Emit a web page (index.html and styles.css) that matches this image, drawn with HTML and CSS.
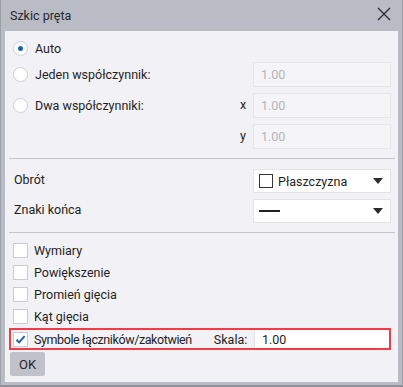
FILE: index.html
```html
<!DOCTYPE html>
<html>
<head>
<meta charset="utf-8">
<link rel="stylesheet" href="styles.css">
</head>
<body>
<div class="window">
  <div class="titlebar">
    <span class="title">Szkic pręta</span>
    <svg class="close" width="14" height="14" viewBox="0 0 14 14"><path d="M1 1L13 13M13 1L1 13" stroke="#2a2a30" stroke-width="1.3" fill="none"/></svg>
  </div>
  <div class="panel">
    <div class="section radios">
      <div class="row r-auto">
        <span class="radio on"></span><span class="label">Auto</span>
      </div>
      <div class="row r-in">
        <span class="radio"></span><span class="label grow">Jeden współczynnik:</span>
        <span class="field disabled">1.00</span>
      </div>
      <div class="row r-in">
        <span class="radio"></span><span class="label grow">Dwa współczynniki:</span>
        <span class="axis">x</span>
        <span class="field disabled">1.00</span>
      </div>
      <div class="row r-in">
        <span class="grow"></span>
        <span class="axis">y</span>
        <span class="field disabled">1.00</span>
      </div>
    </div>
    <div class="sep"></div>
    <div class="section combos">
      <div class="row r-combo">
        <span class="label grow">Obrót</span>
        <div class="combo">
          <span class="sq"></span><span class="combo-text">Płaszczyzna</span>
          <span class="arrow"></span>
        </div>
      </div>
      <div class="row r-combo">
        <span class="label grow">Znaki końca</span>
        <div class="combo">
          <span class="dash"></span><span class="grow"></span>
          <span class="arrow"></span>
        </div>
      </div>
    </div>
    <div class="sep"></div>
    <div class="section checks">
      <div class="row r-check"><span class="check"></span><span class="label">Wymiary</span></div>
      <div class="row r-check"><span class="check"></span><span class="label">Powiększenie</span></div>
      <div class="row r-check"><span class="check"></span><span class="label">Promień gięcia</span></div>
      <div class="row r-check"><span class="check"></span><span class="label">Kąt gięcia</span></div>
      <div class="row r-highlight">
        <span class="check checked"><svg width="13" height="13" viewBox="0 0 13 13"><path d="M2.5 6.8L5.2 9.4L10.6 3.2" stroke="#1d64a8" stroke-width="2" fill="none"/></svg></span>
        <span class="label tight">Symbole łączników/zakotwień</span>
        <span class="skala">Skala:</span>
        <span class="field white">1.00</span>
      </div>
    </div>
    <div class="footer">
      <button class="ok">OK</button>
    </div>
  </div>
</div>
</body>
</html>
```

FILE: styles.css
```css
html, body {
  margin: 0;
  padding: 0;
}
body {
  font-family: Roboto, "Noto Sans", sans-serif;
  font-size: 12.5px;
  color: #1f1f24;
}
.window {
  width: 403px;
  height: 387px;
  box-sizing: border-box;
  background: #b9bcc4;
  border: 1px solid #9c9fa7;
  border-top: none;
  border-bottom: 2px solid #8e9199;
  display: flex;
  flex-direction: column;
}
.titlebar {
  height: 31px;
  display: flex;
  align-items: center;
  padding: 0 11px 0 9px;
  flex: none;
}
.title {
  flex: 1;
  font-size: 12.5px;
  color: #26262c;
  margin-top: -1px;
}
.close {
  margin-top: -4px;
}
.panel {
  margin: 0 4px 0 4px;
  height: 351px;
  background: #f2f1f6;
  display: flex;
  flex-direction: column;
  padding: 0 7px 0 8px;
}
.row {
  display: flex;
  align-items: center;
}
.grow {
  flex: 1;
}
.radios {
  padding-top: 4px;
  display: flex;
  flex-direction: column;
  gap: 6px;
}
.r-auto {
  height: 26px;
  margin-bottom: -5px;
}
.r-in {
  height: 25px;
}
.radio {
  width: 13px;
  height: 13px;
  border-radius: 50%;
  border: 1px solid #cfcfd5;
  background: #fff;
  margin-right: 7px;
  position: relative;
  flex: none;
}
.radio.on::after {
  content: "";
  position: absolute;
  left: 4px;
  top: 4px;
  width: 5px;
  height: 5px;
  border-radius: 50%;
  background: #1666aa;
}
.label {
  white-space: nowrap;
}
.label.tight {
  letter-spacing: -0.4px;
}
.axis {
  width: 13px;
  text-align: left;
  margin-top: -3px;
}
.field {
  width: 138px;
  height: 25px;
  box-sizing: border-box;
  display: flex;
  align-items: center;
  padding-left: 7px;
  flex: none;
}
.field.disabled {
  background: #f5f5f8;
  border: 1px solid #e5e5ea;
  color: #b4b4bc;
}
.sep {
  height: 1px;
  background: #c3c3ca;
  margin: 9px -4px 0 -4px;
}
.combos {
  padding-top: 10px;
  display: flex;
  flex-direction: column;
  gap: 6px;
}
.r-combo {
  height: 24px;
}
.r-combo .label {
  margin-left: 1px;
  margin-top: -3px;
}
.combo {
  width: 138px;
  height: 24px;
  box-sizing: border-box;
  background: #fff;
  border: 1px solid #e2e2e7;
  display: flex;
  align-items: center;
  padding: 0 6px 0 5px;
}
.sq {
  width: 12px;
  height: 12px;
  border: 1.5px solid #333338;
  margin-right: 5px;
  flex: none;
}
.combo-text {
  flex: 1;
}
.arrow {
  width: 0;
  height: 0;
  border-left: 5px solid transparent;
  border-right: 5px solid transparent;
  border-top: 6px solid #2b2b30;
  margin-right: 1px;
}
.dash {
  width: 21px;
  height: 2px;
  background: #2b2020;
}
.checks {
  padding-top: 9px;
  display: flex;
  flex-direction: column;
  gap: 6px;
}
.r-check {
  height: 16px;
}
.check {
  width: 13px;
  height: 13px;
  border: 1px solid #cbcbd1;
  background: #fff;
  margin-right: 6px;
  display: flex;
  align-items: center;
  justify-content: center;
  flex: none;
}
.r-highlight {
  margin: -2px 0 0 -4px;
  height: 22px;
  box-sizing: border-box;
  border: 2px solid #f03c44;
  padding-left: 2px;
}
.skala {
  margin-left: 22px;
  flex: 1;
}
.field.white {
  background: #fff;
  border-left: 1px solid #e2e2e7;
  height: 18px;
  width: 135px;
}
.footer {
  padding-top: 2px;
}
.ok {
  font-family: inherit;
  font-size: 13px;
  width: 35px;
  height: 24px;
  border: none;
  border-radius: 2px;
  background: #c0c2c9;
  color: #26262c;
  margin-left: -3px;
  padding: 0;
}
```
